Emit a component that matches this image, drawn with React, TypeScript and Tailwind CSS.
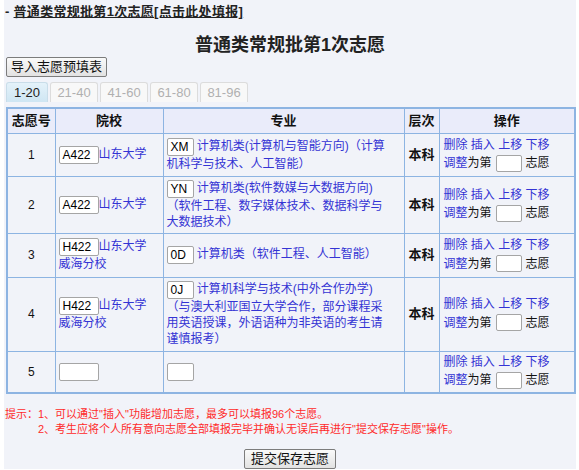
import React from "react";

const L = ({ children }: { children: React.ReactNode }) => (
  <a className="text-[#3434d4] cursor-pointer">{children}</a>
);

const Inp = ({ w, v, h = "h-[18px]" }: { w: string; v?: string; h?: string }) => (
  <span
    className={`inline-block align-middle ${h} leading-[16px] bg-white border border-[#a5a5a5] rounded-[2px] px-[3px] text-[12px] text-black ${w}`}
  >
    {v ?? ""}
  </span>
);

const Ops = () => (
  <td className="border border-[#8db4e2] px-[4px] align-middle text-[12px] leading-[16px]">
    <div className="h-[17px] leading-[17px] whitespace-nowrap">
      <L>删除</L> <L>插入</L> <L>上移</L> <L>下移</L>
    </div>
    <div className="h-[19px] flex items-center whitespace-nowrap">
      <L>调整</L>
      <span>为第</span>
      <span className="inline-block w-[26px] h-[17px] ml-[4px] mr-[4px] bg-white border border-[#a5a5a5] rounded-[2px]" />
      <span>志愿</span>
    </div>
  </td>
);

type Row = {
  n: number;
  h: string;
  code?: string;
  school?: React.ReactNode;
  mcode?: string;
  major?: React.ReactNode;
  level?: string;
};

const rows: Row[] = [
  {
    n: 1,
    h: "h-[43px]",
    code: "A422",
    school: <L>山东大学</L>,
    mcode: "XM",
    major: (
      <>
        计算机类(计算机与智能方向)（计算
        <br />
        机科学与技术、人工智能）
      </>
    ),
    level: "本科",
  },
  {
    n: 2,
    h: "h-[57px]",
    code: "A422",
    school: <L>山东大学</L>,
    mcode: "YN",
    major: (
      <>
        计算机类(软件数媒与大数据方向)
        <br />
        （软件工程、数字媒体技术、数据科学与
        <br />
        大数据技术）
      </>
    ),
    level: "本科",
  },
  {
    n: 3,
    h: "h-[44px]",
    code: "H422",
    school: (
      <>
        <L>山东大学</L>
        <br />
        <L>威海分校</L>
      </>
    ),
    mcode: "0D",
    major: <>计算机类（软件工程、人工智能）</>,
    level: "本科",
  },
  {
    n: 4,
    h: "h-[74px]",
    code: "H422",
    school: (
      <>
        <L>山东大学</L>
        <br />
        <L>威海分校</L>
      </>
    ),
    mcode: "0J",
    major: (
      <>
        计算机科学与技术(中外合作办学)
        <br />
        （与澳大利亚国立大学合作，部分课程采
        <br />
        用英语授课，外语语种为非英语的考生请
        <br />
        谨慎报考）
      </>
    ),
    level: "本科",
  },
  { n: 5, h: "h-[42px]" },
];

export default function App() {
  return (
    <div className="bg-white min-h-[470px] font-['Liberation_Sans','Noto_Sans_CJK_SC',sans-serif] text-[#111]">
      <div className="ml-[4px] w-[572px] h-[469px] bg-[#f1f3f9] flex flex-col">
        <div className="pt-[4px] pl-[1px] h-[20px] text-[13px] leading-[16px] font-bold text-[#222] tracking-[0.3px]">
          - <span className="underline">普通类常规批第1次志愿</span>
          <span className="underline">[点击此处填报]</span>
        </div>
        <div className="mt-[14px] h-[22px] leading-[22px] text-center text-[18px] font-bold text-[#222]">
          普通类常规批第1次志愿
        </div>
        <div className="ml-[2px] mt-[1px] flex">
          <button className="h-[20px] px-[4px] text-[13px] leading-[18px] border border-[#7c7c7c] rounded-[2px] bg-gradient-to-b from-[#fafafa] to-[#e2e2e2] text-[#111]">
            导入志愿预填表
          </button>
        </div>
        <div className="ml-[2px] mt-[5px] flex gap-[2px] h-[20px] text-[13px]">
          <div className="w-[42px] h-[20px] leading-[19px] text-center rounded-t-[3px] border border-b-0 border-[#c9dde9] bg-gradient-to-b from-[#e4f2fa] to-[#cfe6f3] text-[#222]">
            1-20
          </div>
          {["21-40", "41-60", "61-80", "81-96"].map((t) => (
            <div
              key={t}
              className="w-[48px] h-[20px] leading-[19px] text-center rounded-t-[3px] border border-b-0 border-[#dcdcdc] bg-[#f8f8f8] text-[#b0b0b0]"
            >
              {t}
            </div>
          ))}
        </div>
        <table className="ml-[2px] mt-[5px] w-[568px] border-collapse border-2 border-[#8db4e2] table-fixed">
          <colgroup>
            <col className="w-[48px]" />
            <col className="w-[108px]" />
            <col className="w-[241px]" />
            <col className="w-[35px]" />
            <col className="w-[136px]" />
          </colgroup>
          <thead>
            <tr className="h-[25px] bg-[#eaecfa] text-[13px] font-bold">
              <th className="border border-[#8db4e2] font-bold">志愿号</th>
              <th className="border border-[#8db4e2] font-bold">院校</th>
              <th className="border border-[#8db4e2] font-bold">专业</th>
              <th className="border border-[#8db4e2] font-bold">层次</th>
              <th className="border border-[#8db4e2] font-bold">操作</th>
            </tr>
          </thead>
          <tbody>
            {rows.map((r) => (
              <tr key={r.n} className={`${r.h} text-[12px] leading-[16px]`}>
                <td className="border border-[#8db4e2] text-center align-middle">{r.n}</td>
                <td className="border border-[#8db4e2] px-[3px] align-middle">
                  <Inp w="w-[40px]" v={r.code} />
                  {r.school}
                </td>
                <td className="border border-[#8db4e2] px-[3px] align-middle text-[#3434d4]">
                  <Inp w="w-[27px]" v={r.mcode} /> {r.major}
                </td>
                <td className="border border-[#8db4e2] text-center align-middle font-bold text-[13px]">
                  {r.level ?? ""}
                </td>
                <Ops />
              </tr>
            ))}
          </tbody>
        </table>
        <div className="mt-[13px] pl-[1px] text-[11px] leading-[15px] text-[#ff2a2a]">
          <div>提示：1、可以通过"插入"功能增加志愿，最多可以填报96个志愿。</div>
          <div className="pl-[33px]">
            2、考生应将个人所有意向志愿全部填报完毕并确认无误后再进行"提交保存志愿"操作。
          </div>
        </div>
        <div className="mt-[12px] flex justify-center">
          <button className="h-[20px] px-[6px] text-[13px] leading-[18px] border border-[#7c7c7c] rounded-[2px] bg-gradient-to-b from-[#fafafa] to-[#e2e2e2] text-[#111]">
            提交保存志愿
          </button>
        </div>
      </div>
    </div>
  );
}
